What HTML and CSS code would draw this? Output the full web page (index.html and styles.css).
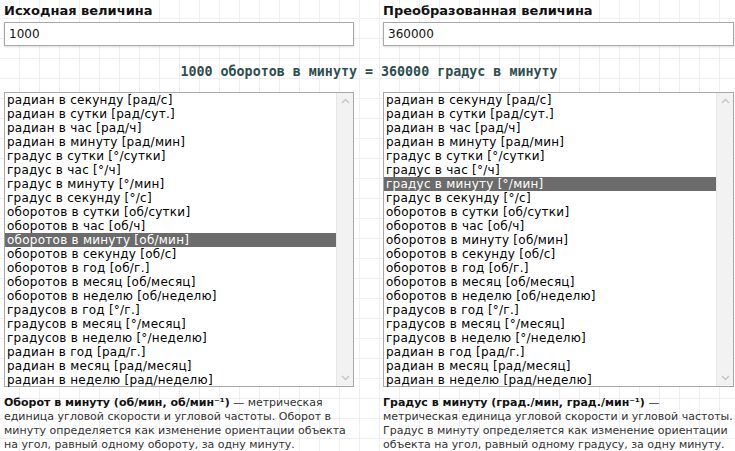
FILE: index.html
```html
<!DOCTYPE html>
<html lang="ru">
<head>
  <meta charset="UTF-8">
  <title>Конвертер угловой скорости</title>
  <link rel="stylesheet" href="styles.css">
</head>
<body>
  <div class="converter">
    <div class="field">
      <label class="field-label">Исходная величина</label>
      <input class="value-input" type="text" value="1000">
    </div>
    <div class="field">
      <label class="field-label">Преобразованная величина</label>
      <input class="value-input" type="text" value="360000">
    </div>

    <div class="result">1000 оборотов в минуту = 360000 градус в минуту</div>

    <div class="listbox">
      <ul class="units">
        <li>радиан в секунду [рад/с]</li>
        <li>радиан в сутки [рад/сут.]</li>
        <li>радиан в час [рад/ч]</li>
        <li>радиан в минуту [рад/мин]</li>
        <li>градус в сутки [°/сутки]</li>
        <li>градус в час [°/ч]</li>
        <li>градус в минуту [°/мин]</li>
        <li>градус в секунду [°/с]</li>
        <li>оборотов в сутки [об/сутки]</li>
        <li>оборотов в час [об/ч]</li>
        <li class="selected">оборотов в минуту [об/мин]</li>
        <li>оборотов в секунду [об/с]</li>
        <li>оборотов в год [об/г.]</li>
        <li>оборотов в месяц [об/месяц]</li>
        <li>оборотов в неделю [об/неделю]</li>
        <li>градусов в год [°/г.]</li>
        <li>градусов в месяц [°/месяц]</li>
        <li>градусов в неделю [°/неделю]</li>
        <li>радиан в год [рад/г.]</li>
        <li>радиан в месяц [рад/месяц]</li>
        <li>радиан в неделю [рад/неделю]</li>
      </ul>
      <div class="scrollbar">
        <svg width="9" height="6" viewBox="0 0 9 6"><path d="M1 5 L4.5 1.5 L8 5" fill="none" stroke="#c4c4c4" stroke-width="1.3"/></svg>
        <svg width="9" height="6" viewBox="0 0 9 6"><path d="M1 1 L4.5 4.5 L8 1" fill="none" stroke="#c4c4c4" stroke-width="1.3"/></svg>
      </div>
    </div>

    <div class="listbox">
      <ul class="units">
        <li>радиан в секунду [рад/с]</li>
        <li>радиан в сутки [рад/сут.]</li>
        <li>радиан в час [рад/ч]</li>
        <li>радиан в минуту [рад/мин]</li>
        <li>градус в сутки [°/сутки]</li>
        <li>градус в час [°/ч]</li>
        <li class="selected">градус в минуту [°/мин]</li>
        <li>градус в секунду [°/с]</li>
        <li>оборотов в сутки [об/сутки]</li>
        <li>оборотов в час [об/ч]</li>
        <li>оборотов в минуту [об/мин]</li>
        <li>оборотов в секунду [об/с]</li>
        <li>оборотов в год [об/г.]</li>
        <li>оборотов в месяц [об/месяц]</li>
        <li>оборотов в неделю [об/неделю]</li>
        <li>градусов в год [°/г.]</li>
        <li>градусов в месяц [°/месяц]</li>
        <li>градусов в неделю [°/неделю]</li>
        <li>радиан в год [рад/г.]</li>
        <li>радиан в месяц [рад/месяц]</li>
        <li>радиан в неделю [рад/неделю]</li>
      </ul>
      <div class="scrollbar">
        <svg width="9" height="6" viewBox="0 0 9 6"><path d="M1 5 L4.5 1.5 L8 5" fill="none" stroke="#c4c4c4" stroke-width="1.3"/></svg>
        <svg width="9" height="6" viewBox="0 0 9 6"><path d="M1 1 L4.5 4.5 L8 1" fill="none" stroke="#c4c4c4" stroke-width="1.3"/></svg>
      </div>
    </div>

    <p class="description"><b>Оборот в минуту (об/мин, об/мин⁻¹)</b> — метрическая<br>единица угловой скорости и угловой частоты. Оборот в<br>минуту определяется как изменение ориентации объекта<br>на угол, равный одному обороту, за одну минуту.</p>
    <p class="description"><b>Градус в минуту (град./мин, град./мин⁻¹)</b> —<br>метрическая единица угловой скорости и угловой частоты.<br>Градус в минуту определяется как изменение ориентации<br>объекта на угол, равный одному градусу, за одну минуту.</p>
  </div>
</body>
</html>
```

FILE: styles.css
```css
* {
  margin: 0;
  padding: 0;
  box-sizing: border-box;
}

html, body {
  width: 100%;
  height: 100%;
  overflow: hidden;
}

body {
  font-family: "DejaVu Sans", Verdana, sans-serif;
  color: #222;
  background-color: #fff;
  background-image:
    linear-gradient(to right, #efefef 1px, transparent 1px),
    linear-gradient(to bottom, #efefef 1px, transparent 1px);
  background-size: 20px 20px;
  background-position: 19px 18px;
}

.converter {
  display: grid;
  grid-template-columns: 350px 351px;
  column-gap: 29px;
  padding: 3px 0 0 4px;
}

.field {
  display: flex;
  flex-direction: column;
}

.field-label {
  font-size: 13px;
  font-weight: bold;
  color: #111;
  line-height: 16px;
  margin-bottom: 3px;
}

.value-input {
  height: 24px;
  border: 1px solid #a9a9a9;
  box-shadow: 0 1px 2px rgba(0, 0, 0, 0.15);
  padding: 0 4px;
  font-family: inherit;
  font-size: 12px;
  color: #111;
  background: #fff;
  outline: none;
}

.result {
  grid-column: 1 / 3;
  text-align: center;
  font-family: "DejaVu Sans Mono", "Liberation Mono", monospace;
  font-weight: bold;
  font-size: 13.33px;
  color: #2f4f4f;
  line-height: 16px;
  padding: 18px 0 12px;
}

.listbox {
  display: flex;
  height: 295px;
  border: 1px solid #a9a9a9;
  background: #fff;
}

.units {
  list-style: none;
  flex: 1;
  font-size: 12px;
  letter-spacing: 0.25px;
  color: #000;
}

.units li {
  height: 14px;
  line-height: 14px;
  padding-left: 2px;
  white-space: nowrap;
}

.units .selected {
  background: #6b6b6b;
  color: #fff;
}

.scrollbar {
  width: 17px;
  background: #f2f2f2;
  border-left: 1px solid #e6e6e6;
  display: flex;
  flex-direction: column;
  justify-content: space-between;
  align-items: center;
  padding: 5px 0;
}

.description {
  font-size: 11px;
  line-height: 14px;
  white-space: nowrap;
  color: #333;
  padding-top: 9px;
}

.description b {
  color: #111;
}
```
